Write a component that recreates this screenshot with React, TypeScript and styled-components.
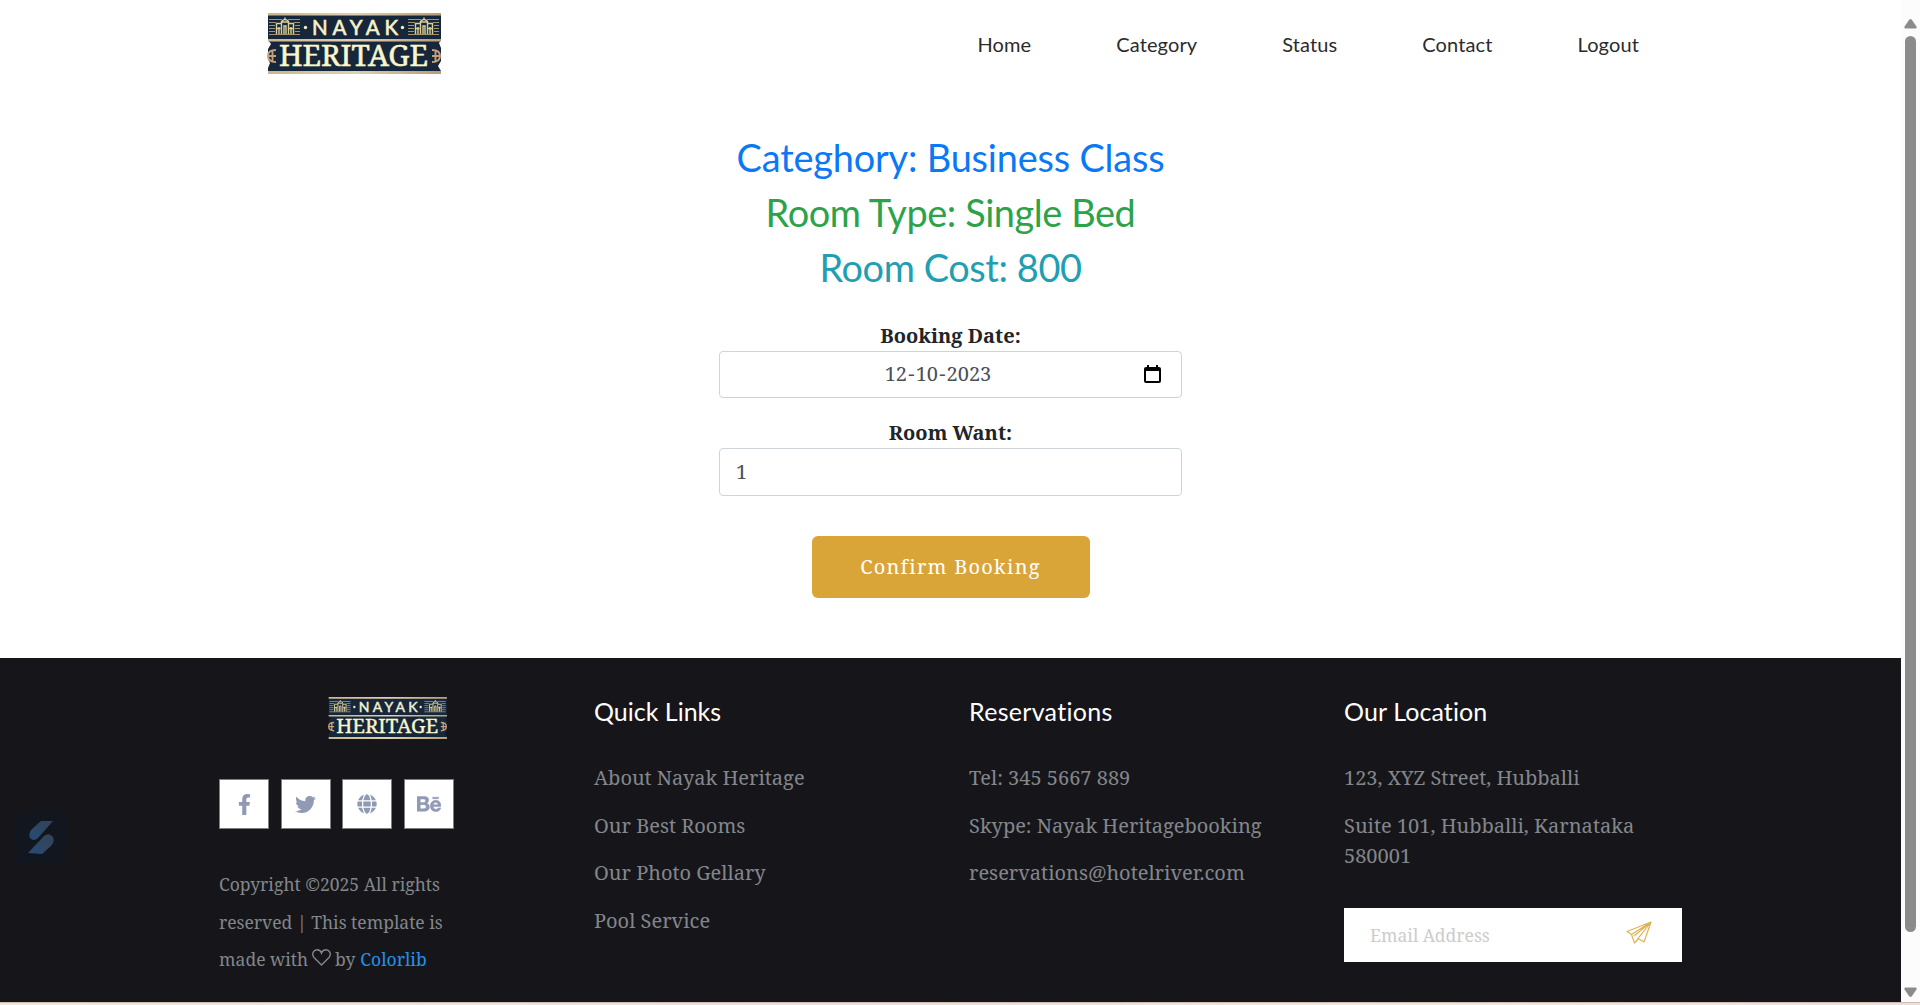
import React from "react";
import styled, { createGlobalStyle } from "styled-components";
import { FaFacebookF, FaTwitter, FaGlobe, FaBehance } from "react-icons/fa";

const SERIF = `"Noto Serif", "Droid Serif", "DejaVu Serif Condensed", "DejaVu Serif", serif`;
const SANS = `Lato, sans-serif`;

const GlobalStyle = createGlobalStyle`
  *, *::before, *::after { box-sizing: border-box; }
  html, body { margin: 0; padding: 0; overflow: hidden; background: #fff; }
  body { font-family: ${SERIF}; font-size: 20px; color: #212529; font-variant-ligatures: none; }
  h1, h4, p, ul { margin: 0; padding: 0; font-weight: 400; }
  ul { list-style: none; }
  a { color: inherit; text-decoration: none; }
`;

const Window = styled.div`
  display: grid;
  grid-template-columns: 1901px 19px;
  grid-template-rows: 1002px 3px;
  width: 1920px;
  height: 1005px;
`;

const Page = styled.div`
  display: flex;
  flex-direction: column;
  position: relative;
  height: 1002px;
`;

const Edge = styled.div`
  grid-column: 1 / -1;
  background: linear-gradient(90deg, #f5e4d5, #f0dcd5 45%, #f6e4d3 75%, #f2dcd6);
  border-top: 1px solid #cdbdb5;
`;

const Header = styled.header`
  display: flex;
  justify-content: space-between;
  align-items: center;
  height: 88px;
  padding: 0 262px 2px 267px;
`;

const Nav = styled.nav`
  display: flex;
  gap: 85px;
  font-family: ${SANS};
  font-size: 20px;
  line-height: 30px;
  letter-spacing: 0.12px;
  color: #2b2b2b;
  padding-top: 2px;
`;

const Main = styled.main`
  display: flex;
  flex-direction: column;
  align-items: center;
  height: 570px;
  padding-top: 47px;
`;

const Title = styled.h1<{ $color: string; $spacing: number }>`
  font-family: ${SANS};
  font-size: 37.9px;
  line-height: 45px;
  height: 55px;
  letter-spacing: ${(p) => p.$spacing}px;
  color: ${(p) => p.$color};
`;

const Form = styled.form`
  display: flex;
  flex-direction: column;
  width: 463px;
  margin-top: 20px;
`;

const Label = styled.label`
  font-weight: 700;
  font-size: 20px;
  line-height: 32px;
  height: 31px;
  text-align: center;
`;

const Field = styled.div<{ $gap: number; $center?: boolean }>`
  display: flex;
  align-items: center;
  justify-content: ${(p) => (p.$center ? "space-between" : "flex-start")};
  height: ${(p) => (p.$center ? 47 : 48)}px;
  padding: 0 20px 1px 16px;
  margin-bottom: ${(p) => p.$gap}px;
  border: 1px solid #ced4da;
  border-radius: 4px;
  color: #495057;
`;

const DateText = styled.span`
  flex: 1;
  text-align: center;
  padding: 0 4px 1px 0;
`;

const Dash = styled.span`
  padding: 0 1.2px;
`;

const Submit = styled.button`
  align-self: center;
  width: 278px;
  height: 62px;
  border: 0;
  border-radius: 6px;
  background: #daa538;
  color: #fff;
  font: 400 20px/30px ${SERIF};
  letter-spacing: 1.25px;
`;

const Footer = styled.footer`
  display: grid;
  grid-template-columns: 375px 375px 375px 338px;
  height: 344px;
  padding-left: 219px;
  background: #16161a;
  color: #83868c;
`;

const Brand = styled.div`
  display: flex;
  flex-direction: column;
  padding: 39px 140px 0 0;
`;

const FooterMark = styled.div`
  height: 82px;
  padding-left: 109px;
`;

const Socials = styled.div`
  display: flex;
  justify-content: space-between;
  width: 235px;
`;

const Social = styled.a`
  display: grid;
  place-items: center;
  width: 50px;
  height: 50px;
  background: #fff;
  border: 1px solid #7d8080;
  color: #919ab4;
`;

const Copyright = styled.div`
  margin-top: 37px;
  font-size: 17.5px;
  line-height: 37.5px;
  white-space: nowrap;
`;

const Line = styled.div`
  display: flex;
  align-items: center;
  height: 37.5px;
`;

const Credit = styled.a`
  color: #2491ea;
  margin-left: 5px;
`;

const HeartIcon = styled.svg`
  margin: -4px 4px 0 4px;
`;

const Column = styled.section`
  padding-top: 38px;
`;

const ColumnTitle = styled.h4<{ $spacing?: number }>`
  font-family: ${SANS};
  font-size: 25px;
  line-height: 31px;
  letter-spacing: ${(p) => p.$spacing ?? 0}px;
  color: #fff;
  margin-bottom: 36px;
`;

const Item = styled.li`
  font-size: 20px;
  line-height: 30px;
  margin-bottom: 17.5px;
  white-space: nowrap;
`;

const Subscribe = styled.div`
  display: flex;
  align-items: center;
  justify-content: space-between;
  width: 338px;
  height: 54px;
  margin-top: 37px;
  padding: 0 30px 0 26px;
  background: #fff;
  color: #ccc;
  font-size: 17.5px;
`;

const PlaneIcon = styled.svg`
  margin-top: -5px;
`;

const Widget = styled.div`
  position: absolute;
  left: 16px;
  top: 813px;
  width: 49px;
  height: 50px;
  background: #12161f;
`;

const ScrollTrack = styled.div`
  display: flex;
  flex-direction: column;
  align-items: center;
  padding-top: 19px;
  background: #fcfcfc;
`;

const Thumb = styled.div`
  width: 11px;
  height: 896px;
  margin: 7px 0 55px;
  border-radius: 6px;
  background: #8b8b8b;
`;

const LogoArt = styled.svg`
  display: block;
  overflow: visible;
`;

function Palace({ x }: { x: number }) {
  return (
    <g transform={`translate(${x} 0)`} fill="none">
      <path d="M1 6.500h13M20 6.500h12M1 9.500h7M26 9.500h6M1 12.500h6M27 12.500h5M1 15.500h6M27 15.500h5M1 18.500h6M27 18.500h5M1 21.500h31" stroke="#a4946a" strokeWidth="1.200" />
      <path d="M8.500 21v-10.500h4.500M25.500 21v-10.500h-4.500M13.500 21V9h7v12M13 9q4-5 8 0M17 6.500V4.500M16 21v-8h2v8M11 21v-7M23 21v-7M8.500 15.500h4M21 15.500h4" stroke="#dccf98" strokeWidth="1.400" />
    </g>
  );
}

function Logo({ width, height }: { width: number; height: number }) {
  return (
    <LogoArt width={width} height={height} viewBox="0 0 174 61" preserveAspectRatio="none">
      <defs>
        <linearGradient id="gold" x1="0" x2="1">
          <stop offset="0" stopColor="#cdb58c" />
          <stop offset=".5" stopColor="#e0d0b0" />
          <stop offset="1" stopColor="#b89c78" />
        </linearGradient>
      </defs>
      <path d="M1 0H174V27L172 30L174 35V48L171 53L174 58V61H1V55L3 50L1 46V36L4 31L1 27Z" fill="#17273b" />
      <path d="M1 0H174V2.500H1ZM1 26H174V28.500H1ZM1 58H174V61H1Z" fill="url(#gold)" />
      <Palace x={1} />
      <Palace x={140} />
      <circle cx="38.500" cy="14.500" r="1.700" fill="#f3edc6" />
      <circle cx="135.500" cy="14.500" r="1.700" fill="#f3edc6" />
      <text x="45" y="21.500" textLength="86" fontFamily="Lato, sans-serif" fontSize="20.5" fontWeight="400" fill="#f8f2cc" stroke="#f8f2cc" strokeWidth=".6">NAYAK</text>
      <text x="12" y="53" textLength="149" lengthAdjust="spacingAndGlyphs" fontFamily={SERIF} fontSize="29" fontWeight="400" fill="#f8f6cc" stroke="#f8f6cc" strokeWidth=".5">HERITAGE</text>
      <g fill="none" stroke="#c79f78" strokeWidth="1.900">
        <path d="M9 37Q1 37 1 43Q1 49 9 49M1 43H9M5.500 38V48" />
        <path d="M165 37Q173 37 173 43Q173 49 165 49M173 43H165M168.500 38V48" />
      </g>
    </LogoArt>
  );
}

function CalendarIcon() {
  return (
    <svg width="17" height="18" viewBox="0 0 17 18">
      <path fillRule="evenodd" d="M3 0h2v2h7V0h2v2h1a2 2 0 0 1 2 2v12a2 2 0 0 1-2 2H2a2 2 0 0 1-2-2V4a2 2 0 0 1 2-2h1zM2 6v10h13V6z" />
    </svg>
  );
}

function Heart() {
  return (
    <HeartIcon width="19" height="17" viewBox="0 0 19 17" fill="none" stroke="#83868c" strokeWidth="1.400">
      <path d="M9.500 16L2 8.500C-1 4.500 2 .8 5 .8C7.500 .8 9 2.500 9.500 4C10 2.500 11.500 .8 14 .8C17 .8 20 4.500 17 8.500Z" />
    </HeartIcon>
  );
}

function PaperPlane() {
  return (
    <PlaneIcon width="26" height="23" viewBox="0 0 26 23" fill="none" stroke="#dfb250" strokeWidth="1.200" strokeLinejoin="round">
      <path d="M25 1L1 10.500L5.500 13.500L25 1L8.500 22L5.500 13.500M25 1L18 21L12 17.500L25 1M8.500 22L12.500 17.500M8 15L25 1" />
    </PlaneIcon>
  );
}

const links = ["About Nayak Heritage", "Our Best Rooms", "Our Photo Gellary", "Pool Service"];
const contacts = ["Tel: 345 5667 889", "Skype: Nayak Heritagebooking", "reservations@hotelriver.com"];

export default function App() {
  return (
    <>
      <GlobalStyle />
      <Window>
        <Page>
          <Header>
            <Logo width={174} height={61} />
            <Nav>
              {["Home", "Category", "Status", "Contact", "Logout"].map((t) => (
                <a key={t}>{t}</a>
              ))}
            </Nav>
          </Header>
          <Main>
            <Title $color="#0b78f5" $spacing={-0.19}>Categhory: Business Class</Title>
            <Title $color="#2ca34a" $spacing={-0.42}>Room Type: Single Bed</Title>
            <Title $color="#219eb2" $spacing={-0.41}>Room Cost: 800</Title>
            <Form>
              <Label>Booking Date:</Label>
              <Field $gap={19} $center>
                <DateText>
                  12<Dash>-</Dash>10<Dash>-</Dash>2023
                </DateText>
                <CalendarIcon />
              </Field>
              <Label>Room Want:</Label>
              <Field $gap={40}>1</Field>
              <Submit type="button">Confirm Booking</Submit>
            </Form>
          </Main>
          <Footer>
            <Brand>
              <FooterMark>
                <Logo width={119} height={42} />
              </FooterMark>
              <Socials>
                <Social><FaFacebookF size={21} /></Social>
                <Social><FaTwitter size={21} /></Social>
                <Social><FaGlobe size={20} /></Social>
                <Social><FaBehance size={24} stroke="#919ab4" strokeWidth={12} /></Social>
              </Socials>
              <Copyright>
                <Line>Copyright ©2025 All rights</Line>
                <Line>reserved | This template is</Line>
                <Line>
                  made with
                  <Heart />
                  by
                  <Credit>Colorlib</Credit>
                </Line>
              </Copyright>
            </Brand>
            <Column>
              <ColumnTitle>Quick Links</ColumnTitle>
              <ul>{links.map((t) => <Item key={t}>{t}</Item>)}</ul>
            </Column>
            <Column>
              <ColumnTitle $spacing={0.3}>Reservations</ColumnTitle>
              <ul>{contacts.map((t) => <Item key={t}>{t}</Item>)}</ul>
            </Column>
            <Column>
              <ColumnTitle $spacing={0.1}>Our Location</ColumnTitle>
              <ul>
                <Item>123, XYZ Street, Hubballi</Item>
                <Item>
                  Suite 101, Hubballi, Karnataka
                  <br />
                  580001
                </Item>
              </ul>
              <Subscribe>
                Email Address
                <PaperPlane />
              </Subscribe>
            </Column>
          </Footer>
          <Widget>
            <svg width="49" height="50" viewBox="0 0 49 50" opacity=".85">
              <defs>
                <linearGradient id="bolt" x1="0" y1="1" x2="1" y2="0">
                  <stop offset="0" stopColor="#2a5688" />
                  <stop offset="1" stopColor="#3c4a5c" />
                </linearGradient>
              </defs>
              <path d="M25 8H37L22 25Q18 29 14 25Q12 20 16 16Z" fill="url(#bolt)" />
              <path d="M12 40L28 23Q33 19 37 24Q39 29 35 33L26 41Z" fill="url(#bolt)" />
            </svg>
          </Widget>
        </Page>
        <ScrollTrack>
          <svg width="13" height="10" viewBox="0 0 13 10"><path d="M5 1Q6.500-.8 8 1L12.500 7.500Q13 9.500 11.500 9.500H1.500Q0 9.500 .5 7.500Z" fill="#8b8b8b" /></svg>
          <Thumb />
          <svg width="13" height="10" viewBox="0 0 13 10"><path d="M5 9Q6.500 10.800 8 9L12.500 2.500Q13 .5 11.500 .5H1.500Q0 .5 .5 2.500Z" fill="#8b8b8b" /></svg>
        </ScrollTrack>
        <Edge />
      </Window>
    </>
  );
}
